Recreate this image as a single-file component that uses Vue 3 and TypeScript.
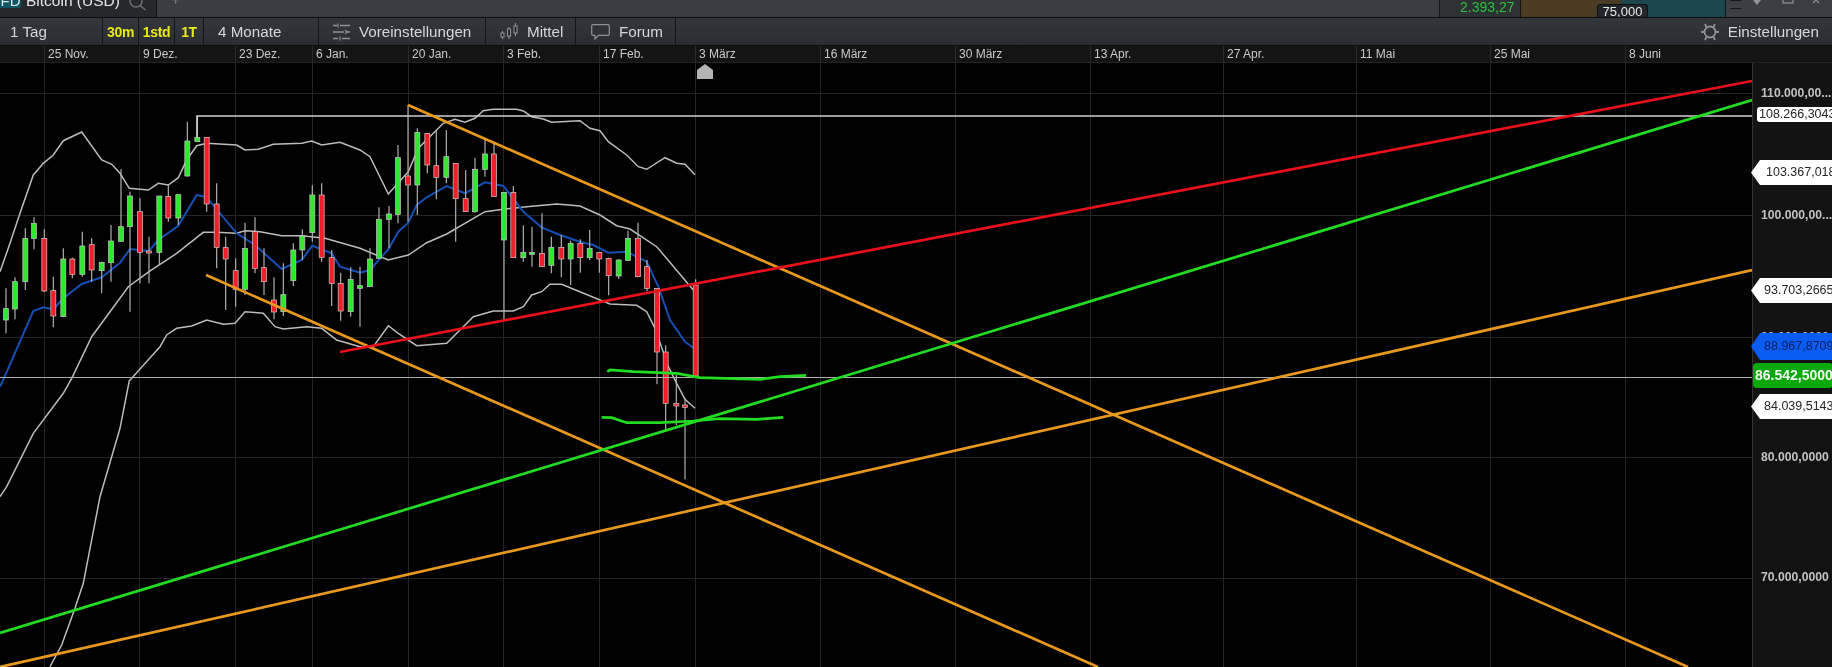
<template>
  <div class="terminal">
    <header class="top-strip">
      <div class="instrument">
        <span class="instrument-tile">FD</span>
        <span class="instrument-name">Bitcoin (USD)</span>
        <svg class="search-icon" width="18" height="18" viewBox="0 0 18 18">
          <circle cx="7" cy="1" r="6" fill="none" stroke="#6d7276" stroke-width="1.4" />
          <path d="M11 5.500 L16.500 10" stroke="#6d7276" stroke-width="1.6" />
        </svg>
      </div>
      <div class="tabs-area"><span class="plus">+</span></div>
      <div class="pnl">2.393,27</div>
      <div class="sell-box"></div>
      <div class="buy-box"></div>
      <div class="qty-tab">75,000</div>
      <div class="window-area">
        <svg class="grip" width="12" height="12" viewBox="0 0 12 12">
          <path d="M0 0.500 H11 M0 8.500 H11" stroke="#15181a" stroke-width="1.2" />
        </svg>
        <svg class="win-icons" width="70" height="6" viewBox="0 0 70 6">
          <path d="M0 0 H8 L4 5 Z" fill="#8f9396" />
          <rect x="30" y="-4" width="10" height="7" fill="none" stroke="#8f9396" stroke-width="1.2" />
          <path d="M60 -3 L66 3 M66 -3 L60 3" stroke="#8f9396" stroke-width="1.2" />
        </svg>
      </div>
    </header>

    <nav class="toolbar">
      <div class="tool period">1 Tag</div>
      <div class="tool quick">30m</div>
      <div class="tool quick">1std</div>
      <div class="tool quick">1T</div>
      <div class="tool range">4 Monate</div>
      <div class="tool presets">
        <svg width="18" height="18" viewBox="0 0 18 18" fill="none" stroke="#8d9295" stroke-width="1.6">
          <path d="M0 2.500 H4 M7 2.500 H17" />
          <path d="M0 9 H11 M14 9 H17" />
          <path d="M0 15.500 H5 M9 15.500 H17" />
          <path d="M5 0.500 V4.500 M12 7 L14 9 L12 11 M7 13.500 V17.500" stroke-width="1.2" />
        </svg>
        Voreinstellungen
      </div>
      <div class="tool size">
        <svg width="18" height="17" viewBox="0 0 18 17" fill="none" stroke="#8d9295" stroke-width="1.1">
          <path d="M2.500 8 V16 M9 4 V16 M15.500 0 V13" />
          <rect x="1" y="10" width="3" height="4" fill="#1f2225" />
          <rect x="7.500" y="6" width="3" height="7" fill="#1f2225" />
          <rect x="14" y="3" width="3" height="7" fill="#1f2225" />
        </svg>
        Mittel
      </div>
      <div class="tool forum">
        <svg width="19" height="16" viewBox="0 0 19 16" fill="none" stroke="#8d9295" stroke-width="1.2">
          <path d="M2 0.700 H17 Q18.300 0.700 18.300 2 V10 Q18.300 11.300 17 11.300 H7.500 L4 15 V11.300 H2 Q0.700 11.300 0.700 10 V2 Q0.700 0.700 2 0.700 Z" />
        </svg>
        Forum
      </div>
      <div class="tool-spacer"></div>
      <div class="settings">
        <svg width="18" height="18" viewBox="0 0 18 18" fill="none" stroke="#8d9295">
          <circle cx="9" cy="9" r="5.500" stroke-width="1.8" />
          <path d="M0 9 H3 M15 9 H18 M4 1 L5.500 4 M14 1 L12.500 4 M4 17 L5.500 14 M14 17 L12.500 14" stroke-width="1.8" />
        </svg>
        Einstellungen
      </div>
    </nav>

    <div class="date-bar">
      <span v-for="d in dates" :key="d.label" class="date" :style="{ left: d.x + 'px' }">{{ d.label }}</span>
    </div>

    <main class="chart-row">
      <svg class="chart" viewBox="0 63 1752 604" preserveAspectRatio="none">
        <line v-for="d in dates" :key="d.label" :x1="d.x + 0.5" y1="63" :x2="d.x + 0.5" y2="667" class="grid" />
        <line v-for="y in gridY" :key="y" x1="0" :y1="y + 0.5" x2="1752" :y2="y + 0.5" class="grid" />

        <path :d="upperBand" class="band" />
        <path :d="middleBand" class="band" />
        <path :d="lowerBand" class="band" />
        <path :d="averageLine" class="average" />

        <g v-for="(c, i) in candles" :key="i">
          <line :x1="c.x" :y1="c.wickTop" :x2="c.x" :y2="c.wickBottom" class="wick" />
          <rect
            :x="c.x - 2.5"
            :y="c.bodyTop"
            width="5"
            :height="Math.max(c.bodyBottom - c.bodyTop, 2)"
            :class="c.up ? 'body-up' : 'body-down'"
          />
        </g>

        <path d="M197 137 V116 H1752" class="hline-top" />
        <line x1="0" y1="377.500" x2="1752" y2="377.500" class="hline" />

        <line x1="408" y1="105" x2="1688" y2="667" class="orange" />
        <line x1="206" y1="275" x2="1098" y2="667" class="orange" />
        <line x1="0" y1="667" x2="1752" y2="270" class="orange" />
        <line x1="340" y1="352" x2="1752" y2="81" class="red" />
        <line x1="0" y1="633" x2="1752" y2="100" class="green" />
        <path :d="scribbleUpper" class="green scribble" />
        <path :d="scribbleLower" class="green scribble" />

        <path d="M697 79 H713 V70 L705 64 L697 70 Z" fill="#b4b4b4" />
      </svg>

      <aside class="axis">
        <span v-for="t in ticks" :key="t.text" class="tick" :style="{ top: t.y + 'px' }">{{ t.text }}</span>
        <span
          v-for="p in prices"
          :key="p.text"
          class="price"
          :class="p.kind"
          :style="{ top: p.y + 'px' }"
        >{{ p.text }}</span>
      </aside>
    </main>
  </div>
</template>

<script setup lang="ts">
interface Candle {
  x: number;
  wickTop: number;
  wickBottom: number;
  bodyTop: number;
  bodyBottom: number;
  up: boolean;
}

type Row = [number, number, number, number, number, 0 | 1];
type Pt = [number, number];

const dates = [
  { label: '25 Nov.', x: 44 },
  { label: '9 Dez.', x: 139 },
  { label: '23 Dez.', x: 235 },
  { label: '6 Jan.', x: 312 },
  { label: '20 Jan.', x: 408 },
  { label: '3 Feb.', x: 503 },
  { label: '17 Feb.', x: 599 },
  { label: '3 März', x: 695 },
  { label: '16 März', x: 820 },
  { label: '30 März', x: 955 },
  { label: '13 Apr.', x: 1090 },
  { label: '27 Apr.', x: 1223 },
  { label: '11 Mai', x: 1356 },
  { label: '25 Mai', x: 1490 },
  { label: '8 Juni', x: 1625 },
];

const gridY = [93, 215, 337, 457, 578];

// axis children are placed from the top of the chart row (page y 63)
const ticks = [
  { text: '110.000,00...', y: 93 - 63 },
  { text: '100.000,00...', y: 215 - 63 },
  { text: '90.000,0000', y: 337 - 63 },
  { text: '80.000,0000', y: 457 - 63 },
  { text: '70.000,0000', y: 577 - 63 },
];

const prices = [
  { text: '108.266,3043', y: 107 - 63, kind: 'boxed' },
  { text: '103.367,018', y: 160 - 63, kind: 'arrow far' },
  { text: '93.703,2665', y: 278 - 63, kind: 'arrow' },
  { text: '88.967,8709', y: 333 - 63, kind: 'arrow blue' },
  { text: '86.542,5000', y: 363 - 63, kind: 'last' },
  { text: '84.039,5143', y: 394 - 63, kind: 'arrow' },
];

// measured on 3x crops, so every row is crop px: x, wick top, wick bottom, body top, body bottom, up
const leftRows: Row[] = [
  [18, 625, 760, 686, 720, 1], [45, 592, 718, 605, 687, 1], [76, 445, 630, 475, 605, 1],
  [102, 412, 508, 430, 475, 1], [133, 448, 636, 475, 633, 0], [160, 590, 742, 632, 708, 0],
  [190, 505, 712, 537, 710, 1], [217, 533, 595, 537, 583, 0], [247, 455, 590, 498, 583, 1],
  [275, 475, 605, 494, 570, 0], [305, 545, 640, 547, 572, 1], [333, 435, 605, 483, 548, 1],
  [363, 268, 485, 440, 484, 1], [390, 335, 695, 348, 440, 1], [420, 355, 610, 395, 517, 0],
  [447, 470, 610, 513, 517, 0], [478, 348, 555, 348, 517, 1], [505, 315, 425, 349, 414, 0],
  [535, 342, 435, 344, 414, 1], [562, 125, 290, 183, 288, 1], [592, 108, 185, 172, 185, 1],
  [620, 172, 395, 172, 372, 0], [650, 310, 565, 372, 502, 0], [677, 470, 690, 503, 537, 0],
  [707, 535, 680, 572, 628, 0], [735, 428, 645, 505, 628, 1], [765, 412, 580, 455, 565, 0],
  [792, 505, 645, 563, 605, 0], [822, 592, 718, 660, 696, 0], [850, 550, 708, 644, 695, 1],
  [880, 490, 618, 510, 602, 1], [907, 448, 540, 468, 510, 1], [937, 316, 485, 345, 458, 1],
  [965, 310, 545, 345, 532, 0], [995, 510, 678, 533, 610, 0], [1022, 578, 722, 610, 693, 0],
  [1052, 562, 710, 598, 695, 1],
];

const rightRows: Row[] = [
  [0, 560, 740, 617, 625, 1], [30, 505, 620, 537, 620, 1], [57, 382, 535, 418, 535, 1],
  [87, 378, 505, 402, 418, 1], [114, 195, 430, 233, 403, 1], [144, 75, 425, 288, 315, 0],
  [172, 145, 405, 157, 315, 1], [202, 160, 280, 160, 255, 0], [229, 150, 358, 257, 292, 0],
  [259, 150, 310, 230, 292, 1], [287, 250, 485, 250, 356, 0], [317, 270, 396, 356, 395, 0],
  [345, 233, 398, 268, 395, 1], [375, 180, 290, 222, 268, 1], [402, 190, 350, 222, 349, 0],
  [432, 335, 720, 337, 480, 1], [460, 318, 534, 337, 533, 0], [490, 436, 545, 517, 533, 1],
  [516, 440, 560, 517, 522, 1], [546, 400, 560, 520, 560, 0], [574, 470, 580, 502, 556, 1],
  [604, 465, 592, 502, 537, 0], [632, 482, 615, 490, 537, 1], [661, 478, 578, 490, 533, 0],
  [689, 450, 540, 505, 533, 1], [718, 516, 578, 517, 537, 0], [746, 533, 646, 535, 587, 0],
  [776, 538, 597, 540, 588, 1], [804, 452, 542, 475, 541, 1], [834, 428, 592, 475, 590, 0],
  [861, 540, 633, 560, 625, 0],
];

const lastRows: Row[] = [
  [171, 55, 343, 55, 246, 0], [197, 226, 480, 246, 400, 0], [229, 315, 465, 400, 408, 0],
  [255, 385, 628, 405, 412, 0], [287, 28, 320, 45, 318, 0],
];

function fromCrop(rows: Row[], ox: number, oy: number): Candle[] {
  return rows.map(([x, wt, wb, bt, bb, up]) => ({
    x: ox + x / 3,
    wickTop: oy + wt / 3,
    wickBottom: oy + wb / 3,
    bodyTop: oy + bt / 3,
    bodyBottom: oy + bb / 3,
    up: up === 1,
  }));
}

const candles: Candle[] = [
  ...fromCrop(leftRows, 0, 80),
  ...fromCrop(rightRows, 360, 80),
  ...fromCrop(lastRows, 600, 270),
];

function line(parts: [number, number, Pt[]][]): string {
  const pts: string[] = [];
  for (const [ox, oy, list] of parts) {
    for (const [x, y] of list) pts.push(`${(ox + x / 3).toFixed(1)} ${(oy + y / 3).toFixed(1)}`);
  }
  return 'M' + pts.join(' L');
}

const upperBand = line([
  [0, 80, [[0, 575], [30, 490], [60, 400], [100, 285], [130, 250], [160, 225], [190, 182], [245, 156], [305, 240], [335, 253], [360, 280], [388, 325], [445, 330], [475, 310], [505, 315], [535, 293], [560, 240], [590, 197], [620, 190], [710, 195], [735, 210], [775, 208], [820, 193], [905, 190], [935, 183], [965, 195], [1020, 187]]],
  [360, 80, [[0, 210], [30, 230], [85, 342], [145, 275], [175, 205], [250, 130], [285, 118], [315, 127], [345, 115], [370, 92], [400, 88], [470, 88], [490, 93], [515, 110], [550, 117], [575, 127], [660, 122], [690, 145], [720, 152], [745, 185], [800, 225], [835, 260], [860, 268], [915, 233], [950, 250], [975, 253], [1005, 284]]],
]);

const middleBand = line([
  [0, 360, [[0, 410], [20, 380], [100, 220], [190, 100]]],
  [0, 80, [[215, 895], [275, 770], [385, 620], [447, 575], [530, 520], [610, 457], [650, 457], [710, 460], [735, 452], [780, 455], [845, 467], [905, 467], [975, 475]]],
  [360, 80, [[0, 505], [85, 540], [145, 525], [200, 488], [260, 462], [375, 395], [430, 388], [500, 380], [590, 372], [660, 378], [720, 405], [770, 437], [810, 447], [890, 500], [1000, 630]]],
]);

const lowerBand = line([
  [0, 360, [[150, 920], [185, 855], [225, 745], [250, 670], [300, 410], [360, 205], [388, 62]]],
  [0, 80, [[395, 895], [480, 800], [500, 765], [530, 745], [575, 738], [620, 720], [670, 733], [705, 730], [735, 695], [790, 700], [825, 740], [850, 747], [920, 740], [965, 745], [1010, 780]]],
  [360, 80, [[0, 800], [40, 800], [85, 737], [115, 760], [170, 797], [260, 790], [310, 740], [340, 710], [400, 693], [460, 693], [490, 680], [515, 645], [545, 635], [570, 613], [605, 613], [720, 660], [750, 672], [830, 676]]],
  [600, 270, [[140, 125], [165, 175], [205, 290], [230, 340], [255, 388], [285, 415]]],
]);

const averageLine = line([
  [0, 360, [[0, 80], [13, 52]]],
  [0, 80, [[100, 693], [130, 682], [160, 688], [190, 655], [245, 612], [305, 592], [360, 548], [390, 507], [447, 513], [475, 480], [535, 437], [590, 345], [620, 352], [710, 460], [765, 495], [845, 567], [905, 540], [937, 497], [995, 520], [1020, 560]]],
  [360, 80, [[0, 578], [30, 570], [85, 508], [115, 455], [145, 428], [170, 375], [200, 352], [260, 318], [315, 340], [375, 307], [430, 318], [490, 395], [545, 442], [600, 465], [660, 485], [700, 495], [745, 518], [800, 515], [860, 545], [895, 620], [930, 720], [975, 785], [1000, 803]]],
]);

const scribbleUpper = line([
  [600, 270, [[22, 305], [30, 300], [100, 305], [230, 310], [300, 323], [400, 326], [480, 328], [540, 320], [618, 316]]],
]);

const scribbleLower = line([
  [600, 270, [[5, 442], [35, 443], [80, 458], [180, 458], [280, 453], [360, 446], [470, 448], [550, 442]]],
]);
</script>

<style>
html, body {
  margin: 0;
  background: #000;
  overflow: hidden;
}
</style>

<style scoped>
.terminal {
  width: 1832px;
  height: 667px;
  display: flex;
  flex-direction: column;
  overflow: hidden;
  background: #000;
  font-family: "Liberation Sans", Arial, sans-serif;
  filter: blur(0.4px);
}

.top-strip {
  position: relative;
  display: flex;
  height: 18px;
  box-sizing: border-box;
  flex-shrink: 0;
  overflow: hidden;
  border-bottom: 1px solid #0d0d0d;
  background: #2d3134;
}

.instrument {
  display: flex;
  width: 157px;
  box-sizing: border-box;
  background: #26292c;
  border-right: 1px solid #111;
  flex-shrink: 0;
}
.instrument-tile {
  width: 21px;
  height: 8px;
  background: #0d5560;
  color: #dfe5e7;
  font-size: 15px;
  line-height: 2px;
  text-align: center;
  border-bottom-right-radius: 3px;
}
.instrument-name {
  margin-left: 5px;
  color: #e3e6e7;
  font-size: 15.500px;
  line-height: 0;
  padding-top: 1px;
  white-space: nowrap;
}
.search-icon { margin-left: 9px; }

.tabs-area {
  width: 1283px;
  flex-shrink: 0;
  box-sizing: border-box;
  position: relative;
  background: #3a3e42;
  border-right: 1px solid #15181a;
}
.plus {
  position: absolute;
  left: 14px;
  top: -9px;
  color: #777c80;
  font-size: 16px;
}

.pnl {
  width: 80px;
  flex-shrink: 0;
  padding-left: 20px;
  box-sizing: border-box;
  color: #2fbf3f;
  font-size: 14px;
  line-height: 15px;
}
.sell-box { width: 101px; box-sizing: border-box; background: #4a3b25; border-left: 1px solid #111; flex-shrink: 0; }
.buy-box { width: 105px; box-sizing: border-box; background: #1c4650; border-right: 1px solid #111; flex-shrink: 0; }
.qty-tab {
  position: absolute;
  left: 1597px;
  top: 4px;
  width: 51px;
  height: 14px;
  background: #22262a;
  border: 1px solid #111;
  border-radius: 3px 3px 0 0;
  box-sizing: border-box;
  color: #e6e9ea;
  font-size: 13px;
  line-height: 13px;
  text-align: center;
}
.window-area {
  flex: 1;
  display: flex;
  background: #3b3f43;
}
.grip { margin-left: 4px; }
.win-icons { margin-left: 11px; }

.toolbar {
  display: flex;
  align-items: stretch;
  height: 28px;
  box-sizing: border-box;
  flex-shrink: 0;
  background: linear-gradient(#33373b, #2a2e32);
  color: #d3d7d9;
  font-size: 15.200px;
  border-bottom: 1px solid #0d0d0d;
}
.tool {
  display: flex;
  align-items: center;
  box-sizing: border-box;
  border-right: 1px solid #14171a;
  white-space: nowrap;
}
.tool svg { flex-shrink: 0; }
.period { width: 103px; padding-left: 10px; }
.quick {
  justify-content: center;
  color: #e9e81c;
  font-size: 14px;
  font-weight: 700;
  letter-spacing: -0.3px;
}
.quick:nth-child(2) { width: 36px; }
.quick:nth-child(3) { width: 36px; }
.quick:nth-child(4) { width: 29px; }
.range { width: 115px; padding-left: 14px; }
.presets { width: 167px; padding-left: 14px; gap: 8px; }
.size { width: 90px; padding-left: 14px; gap: 9px; }
.forum { width: 100px; padding-left: 15px; gap: 9px; }
.tool-spacer { flex: 1; }
.settings {
  display: flex;
  align-items: center;
  gap: 9px;
  padding-right: 13px;
}

.date-bar {
  position: relative;
  height: 17px;
  box-sizing: border-box;
  flex-shrink: 0;
  background: #141414;
  border-bottom: 1px solid #222;
  overflow: hidden;
}
.date {
  position: absolute;
  top: 0;
  height: 16px;
  padding-left: 3px;
  border-left: 1px solid #2a2a2a;
  color: #cacaca;
  font-size: 12px;
  line-height: 16px;
  white-space: nowrap;
}

.chart-row {
  flex: 1;
  display: flex;
  min-height: 0;
}
.chart {
  display: block;
  width: 1752px;
  height: 100%;
  flex-shrink: 0;
}
.grid { stroke: #242424; stroke-width: 1; }
.band { fill: none; stroke: #bcbcbc; stroke-width: 1.500; }
.average { fill: none; stroke: #1450b4; stroke-width: 2; }
.wick { stroke: #b0b0b0; stroke-width: 1.200; }
.body-up { fill: #2ee82e; stroke: #c8c8c8; stroke-width: 0.7; }
.body-down { fill: #ec2028; stroke: #d8c8c8; stroke-width: 0.7; }
.hline-top { fill: none; stroke: #d0d0d0; stroke-width: 1.600; }
.hline { stroke: #b0b0b0; stroke-width: 1.200; }
.orange { stroke: #e8981c; stroke-width: 2.700; }
.red { stroke: #e8101a; stroke-width: 2.700; }
.green { stroke: #22dc22; stroke-width: 2.700; }
.scribble { fill: none; }

.axis {
  position: relative;
  flex: 1;
  background: #131313;
  border-left: 1px solid #333;
  box-sizing: border-box;
}
.tick {
  position: absolute;
  left: 8px;
  transform: translateY(-50%);
  color: #c2c2c2;
  font-size: 12.200px;
  font-weight: 700;
  white-space: nowrap;
}
.price {
  position: absolute;
  left: -2px;
  width: 81px;
  height: 25px;
  box-sizing: border-box;
  overflow: hidden;
  color: #262626;
  font-size: 12.500px;
  line-height: 25px;
  white-space: nowrap;
}
.arrow {
  background: #fff;
  padding-left: 13px;
  clip-path: polygon(0 50%, 9px 0, 100% 0, 100% 100%, 9px 100%);
}
.arrow.far { padding-left: 15px; }
.arrow.blue {
  height: 27px;
  line-height: 27px;
  background: #0a5cf2;
  color: #06205f;
}
.boxed {
  left: 4px;
  width: 76px;
  height: 15px;
  padding-left: 2px;
  line-height: 15px;
  background: #fff;
  border-radius: 3px 0 0 3px;
}
.last {
  left: 0;
  width: 80px;
  padding-left: 2px;
  background: #0aa80a;
  border-radius: 4px;
  color: #f1f8f0;
  font-size: 14px;
  font-weight: 700;
}
</style>
